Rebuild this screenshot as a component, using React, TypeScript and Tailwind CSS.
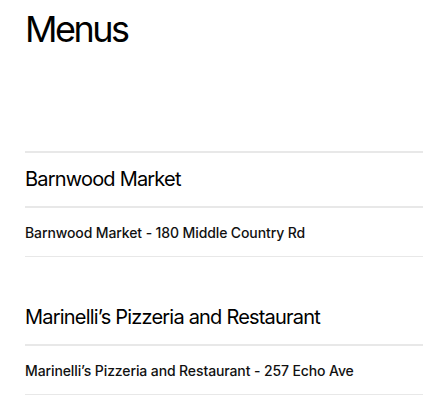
const menus = [
  {
    name: "Barnwood Market",
    items: ["Barnwood Market - 180 Middle Country Rd"],
  },
  {
    name: "Marinelli’s Pizzeria and Restaurant",
    items: ["Marinelli’s Pizzeria and Restaurant - 257 Echo Ave"],
  },
];

export default function App() {
  return (
    <div className="min-h-screen bg-white pl-[25px] pt-[9px] font-['Inter',sans-serif] text-[#111]">
      <h1 className="text-[36px] leading-10 font-normal tracking-[-0.07em] text-black">Menus</h1>

      <div className="mt-[102px] border-t-2 border-[#e8e8e8]">
        {menus.map((menu, i) => (
          <section key={menu.name} className={i > 0 ? "mt-[34px]" : ""}>
            <h2 className="border-b-2 border-[#e8e8e8] pt-[12px] pb-[13px] text-xl tracking-[-0.04em] text-black">
              {menu.name}
            </h2>
            <ul>
              {menu.items.map((item) => (
                <li
                  key={item}
                  className="border-b border-[#e8e8e8] pt-[15px] pb-[13px] text-sm font-medium tracking-[-0.008em] text-[#111]"
                >
                  {item}
                </li>
              ))}
            </ul>
          </section>
        ))}
      </div>
    </div>
  );
}
